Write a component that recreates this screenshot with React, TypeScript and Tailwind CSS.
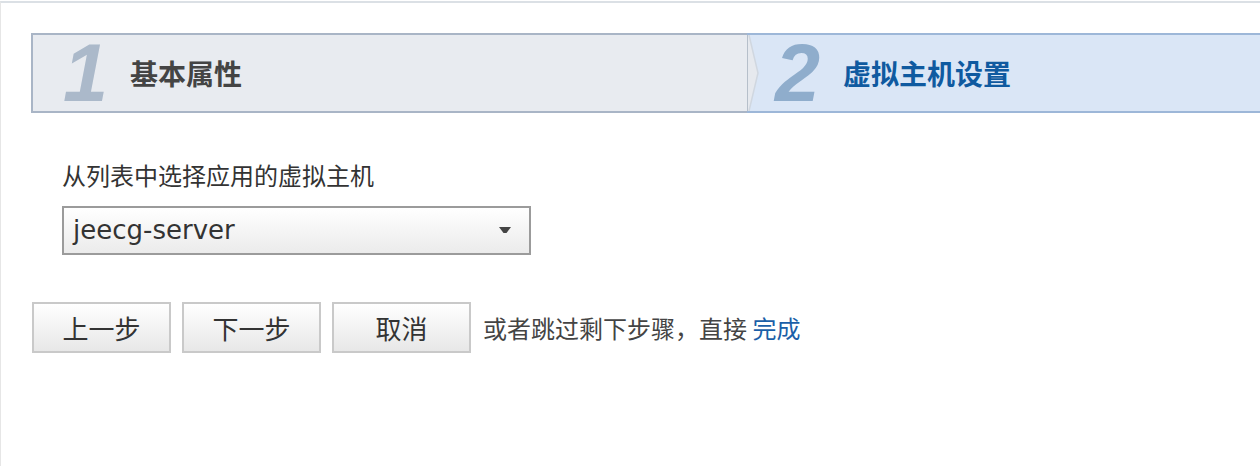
import React from "react";

const cjk = "font-['Noto_Sans_CJK_SC','Noto_Sans',sans-serif]";

function StepBar() {
  return (
    <div className="flex h-[80px]">
      <div className="relative flex w-[716px] shrink-0 items-center border-2 border-r-0 border-[#a9b5c6] bg-[#e8ebf0]">
        <span className="ml-[30px] w-[66px] font-['Liberation_Sans',sans-serif] text-[81px] leading-none font-bold italic text-[#abb9ca]">
          1
        </span>
        <span className={`${cjk} ml-[1px] text-[28px] font-bold text-[#444]`}>基本属性</span>
      </div>
      <div className="relative flex flex-1 items-center border-y-2 border-[#9db7d8] bg-[#dae6f6]">
        <div className="absolute top-0 bottom-0 left-0 w-px bg-[#b6bfca]" />
        <svg className="absolute top-0 left-px h-full w-[12px]" viewBox="0 0 12 76" preserveAspectRatio="none">
          <polygon points="0,0 1,0 10,38 1,76 0,76" fill="#e6e9ee" />
          <polyline points="1,0 10,38 1,76" fill="none" stroke="#d0d7e0" strokeWidth="1.5" />
        </svg>
        <span className="ml-[28px] w-[68px] font-['Liberation_Sans',sans-serif] text-[81px] leading-none font-bold italic text-[#8fadcc]">
          2
        </span>
        <span className={`${cjk} text-[28px] font-bold text-[#0f5aa0]`}>虚拟主机设置</span>
      </div>
    </div>
  );
}

function Button({ label }: { label: string }) {
  return (
    <button className={`${cjk} h-[51px] w-[139px] border-2 border-[#c9c9c9] bg-gradient-to-b from-white to-[#e7e7e7] text-[26px] text-[#333]`}>
      {label}
    </button>
  );
}

export default function App() {
  return (
    <div className="min-h-[466px] bg-white pt-px">
      <div className="min-h-[465px] border-t-2 border-l border-t-[#dbe0e5] border-l-[#e6e6e6] pt-[30px] pl-[30px]">
        <StepBar />

        <div className="pl-[31px] pt-[45px]">
          <p className={`${cjk} text-[24px] leading-[34px] text-[#333]`}>从列表中选择应用的虚拟主机</p>
          <div className="mt-[14px] flex h-[49px] w-[469px] items-center justify-between border-2 border-[#9b9b9b] bg-gradient-to-b from-white to-[#ebebeb] pr-[18px] pl-[9px]">
            <span className="font-['DejaVu_Sans',sans-serif] text-[26px] text-[#333]">jeecg-server</span>
            <svg width="12" height="7" viewBox="0 0 12 7">
              <polygon points="0,0 12,0 7.5,6 4.5,6" fill="#444" />
            </svg>
          </div>
        </div>

        <div className="mt-[47px] flex items-center gap-[11px] pl-px">
          <Button label="上一步" />
          <Button label="下一步" />
          <Button label="取消" />
          <span className={`${cjk} ml-px text-[24px] text-[#444]`}>
            或者跳过剩下步骤，直接 <a className="text-[#1b5fa8]">完成</a>
          </span>
        </div>
      </div>
    </div>
  );
}
